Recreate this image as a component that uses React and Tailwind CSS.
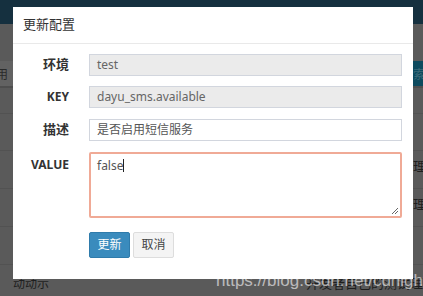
import React from "react";

export default function App() {
  const font = { fontFamily: '"Noto Sans", "Open Sans", "Noto Sans CJK SC", sans-serif' };
  return (
    <div className="relative w-[423px] h-[296px] overflow-hidden bg-[#5a5a5a]" style={font}>
      {/* underlying page (dimmed) */}
      <div className="flex flex-col w-full h-full">
        <div className="h-[24px] bg-[#15303f] shrink-0" />
        <div className="h-[37px] shrink-0" />
        <div className="flex h-[27px] shrink-0 border-b-2 border-[#4e4e4e]">
          <div className="w-[13px] bg-[#626262] text-[12px] leading-[27px] text-[#2a2a2a] overflow-hidden whitespace-nowrap">
            <span className="ml-[-4px]">用</span>
          </div>
          <div className="flex-1" />
          <div className="w-[10px] bg-[#0d4a5e] text-[12px] leading-[27px] text-[#3d6a78] overflow-hidden whitespace-nowrap">索</div>
        </div>
        <div className="h-[26px] border-b border-[#525252] shrink-0" />
        <div className="h-[37px] border-b border-[#525252] shrink-0" />
        <div className="h-[38px] border-b border-[#525252] shrink-0 flex justify-end items-center">
          <span className="text-[13px] text-[#1e1e1e] w-[10px] overflow-hidden whitespace-nowrap mb-[6px]">理</span>
        </div>
        <div className="h-[38px] border-b border-[#525252] shrink-0 flex justify-end items-center">
          <span className="text-[13px] text-[#1e1e1e] w-[10px] overflow-hidden whitespace-nowrap mb-[6px]">理</span>
        </div>
        <div className="h-[38px] border-b border-[#525252] shrink-0" />
        <div className="flex-1 flex items-end pb-[3px]">
          <span className="ml-[13px] text-[12px] text-[#1e1e1e] whitespace-nowrap">动动示</span>
          <span className="ml-auto text-[13px] text-[#1e1e1e] whitespace-nowrap">开发者自己的测试理</span>
        </div>
      </div>

      {/* modal */}
      <div className="absolute left-[13px] top-[7px] w-[400px] h-[272px] bg-white flex flex-col">
        <div className="h-[37px] border-b border-[#e9e9e9] px-[10px] flex items-center text-[13px] text-[#333]">更新配置</div>
        <div className="flex flex-col pt-[10px] pl-[76px] pr-[11px] text-[12px] text-[#555]">
          <div className="relative flex items-center h-[22px]">
            <span className="absolute right-[333px] font-bold text-[13px] text-[#333] whitespace-nowrap">环境</span>
            <div className="w-full h-full bg-[#ebebeb] border border-[#d2d6de] px-[7px] flex items-center text-[#666]">test</div>
          </div>
          <div className="relative flex items-center h-[22px] mt-[10px]">
            <span className="absolute right-[333px] font-bold text-[12px] text-[#333] whitespace-nowrap">KEY</span>
            <div className="w-full h-full bg-[#ebebeb] border border-[#d2d6de] px-[7px] flex items-center text-[#666]">dayu_sms.available</div>
          </div>
          <div className="relative flex items-center h-[22px] mt-[11px]">
            <span className="absolute right-[333px] font-bold text-[13px] text-[#333] whitespace-nowrap">描述</span>
            <div className="w-full h-full bg-white border border-[#d2d6de] px-[7px] flex items-center text-[#555]">是否启用短信服务</div>
          </div>
          <div className="relative h-[66px] mt-[11px]">
            <span className="absolute right-[333px] top-[4px] font-bold text-[12px] text-[#333] whitespace-nowrap">VALUE</span>
            <div className="relative w-full h-full border-2 border-[#f0aa96] rounded-[2px] px-[6px] pt-[3px] text-[#555]">
              <span>false</span>
              <span className="inline-block w-[1px] h-[13px] bg-[#222] align-[-2px]" />
              <svg className="absolute right-[1px] bottom-[1px]" width="8" height="8" viewBox="0 0 8 8">
                <path d="M7 1 L1 7 M7 4 L4 7" stroke="#666" strokeWidth="1" />
              </svg>
            </div>
          </div>
          <div className="flex gap-[3px] mt-[14px]">
            <div className="w-[41px] h-[26px] bg-[#3a8bbd] border border-[#2f7bab] rounded-[2px] text-white text-[12px] flex items-center justify-center">更新</div>
            <div className="w-[41px] h-[26px] bg-[#f4f4f4] border border-[#ddd] rounded-[2px] text-[#444] text-[12px] flex items-center justify-center">取消</div>
          </div>
        </div>
      </div>

      {/* watermark */}
      <div className="absolute left-[216px] top-[268px] text-[17px] text-white/60 whitespace-nowrap" style={{ fontFamily: '"Liberation Sans", Arial, sans-serif' }}>
        https://blog.csdn.net/cdnight
      </div>
    </div>
  );
}
